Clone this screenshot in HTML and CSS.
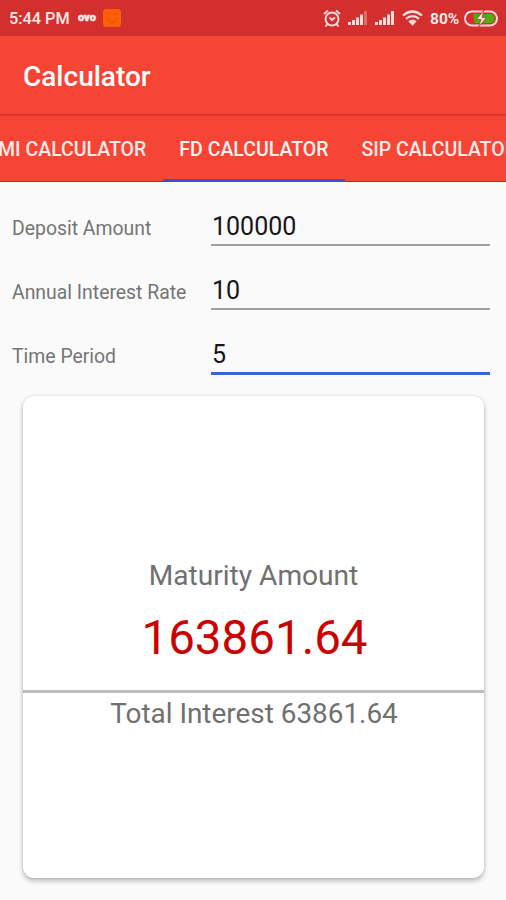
FILE: index.html
```html
<!DOCTYPE html>
<html lang="en">
<head>
  <meta charset="UTF-8" />
  <meta name="viewport" content="width=device-width, initial-scale=1.0" />
  <title>Calculator</title>
  <link rel="stylesheet" href="styles.css">
</head>
<body>

  <!-- Status Bar -->
  <div class="status-bar">
    <span class="time">5:44 PM</span>
    <span class="ovo">ovo</span>
    <svg class="app-icon" width="18" height="18" viewBox="0 0 18 18">
      <rect width="18" height="18" rx="3" fill="#fb5f05" />
      <path d="M4 3.500l2 2M14 4l-3 1.500M5 8.500q0 5 4 5t5-5" fill="none" stroke="#e84a00" stroke-width="1" />
    </svg>
    <div class="status-icons">
      <svg width="18" height="19" viewBox="0 0 18 19" fill="none" stroke="#ffdcda" stroke-width="1.9">
        <circle cx="9" cy="10" r="6.5" />
        <path d="M1 5l4-3.500M17 5l-4-3.500M4.500 15l-2 2.500M13.500 15l2 2.500M6.500 8.500l2.500 2.500 3-2.500" />
      </svg>
      <svg class="signal" width="20" height="14" viewBox="0 0 20 14" fill="#ffdcda">
        <path d="M0 11h3v3H0zM4 9h3v5H4zM8 6.500h3V14H8zM12 3.500h3V14h-3z" />
        <path d="M16 0h3v14h-3z" opacity=".35" />
      </svg>
      <svg class="signal" width="20" height="14" viewBox="0 0 20 14" fill="#ffdcda">
        <path d="M0 11h3v3H0zM4 9h3v5H4zM8 6.500h3V14H8zM12 3.500h3V14h-3zM16 0h3v14h-3z" />
      </svg>
      <svg class="wifi" width="21" height="16" viewBox="0 0 21 16" fill="none" stroke="#ffdcda" stroke-width="2.2">
        <path d="M1 5.500q9.500-8 19 0M4 8.800q6.500-5.500 13 0M7 12q3.500-2.800 7 0" />
        <path d="M7.500 12.500l3 3.300 3-3.300q-3-2-6 0z" fill="#ffdcda" stroke="none" />
      </svg>
      <span class="percent">80%</span>
      <svg class="battery" width="35" height="17" viewBox="0 0 35 17">
        <rect x="1" y="1.500" width="32" height="14" rx="7" fill="none" stroke="#ffdcda" stroke-width="2" />
        <path d="M9 4h17a4.500 4.500 0 0 1 0 9H11z" fill="#4caf0a" />
        <path d="M20 0l-7.500 9.500h4.500L14.500 17 22.500 7.500H18z" fill="#ffe9e7" stroke="#d32f2f" stroke-width=".8" />
      </svg>
    </div>
  </div>

  <header class="toolbar">
    <h1>Calculator</h1>
  </header>

  <!-- Tabs, scrolled part way -->
  <nav class="tabs">
    <a class="tab">EMI CALCULATOR</a>
    <a class="tab active">FD CALCULATOR</a>
    <a class="tab">SIP CALCULATOR</a>
  </nav>

  <main>
    <form class="fields">
      <div class="field">
        <label for="deposit">Deposit Amount</label>
        <input type="text" id="deposit" value="100000">
      </div>
      <div class="field">
        <label for="rate">Annual Interest Rate</label>
        <input type="text" id="rate" value="10">
      </div>
      <div class="field">
        <label for="period">Time Period</label>
        <input type="text" id="period" class="focused" value="5">
      </div>
    </form>

    <!-- Result -->
    <div class="card">
      <div class="maturity">
        <p class="caption">Maturity Amount</p>
        <p class="amount">163861.64</p>
      </div>
      <p class="caption interest">Total Interest 63861.64</p>
    </div>
  </main>

</body>
</html>
```

FILE: styles.css
```css
* {
  box-sizing: border-box;
  margin: 0;
  padding: 0;
  font-family: Roboto, "Liberation Sans", sans-serif;
}

body {
  width: 506px;
  height: 900px;
  overflow: hidden;
  display: flex;
  flex-direction: column;
  background-color: #fafafa;
}

.status-bar {
  height: 36px;
  flex-shrink: 0;
  display: flex;
  align-items: center;
  padding: 0 7px 0 9px;
  background-color: #d32f2f;
  color: #ffe9e7;
}

.time {
  width: 69px;
  padding-top: 1px;
  font-size: 16.3px;
  font-weight: 500;
  white-space: nowrap;
}

.ovo {
  width: 25px;
  font-size: 11px;
  font-weight: 900;
  line-height: 12px;
  -webkit-text-stroke: 0.5px #ffe9e7;
}

.status-icons {
  margin-left: auto;
  display: flex;
  align-items: center;
}

.signal {
  margin-left: 7px;
}

.wifi {
  margin-left: 7px;
}

.percent {
  width: 34px;
  margin-left: 7px;
  padding-top: 1px;
  font-size: 15.5px;
  font-weight: 700;
}

.toolbar {
  height: 79px;
  flex-shrink: 0;
  display: flex;
  align-items: center;
  padding: 3px 23px 0;
  background-color: #f64435;
  border-bottom: 1px solid #c9382c;
  box-shadow: 0 1px 1px rgba(0, 0, 0, 0.1);
  z-index: 1;
}

h1 {
  font-size: 28px;
  font-weight: 500;
  color: #fff;
}

.tabs {
  width: 506px;
  height: 67px;
  flex-shrink: 0;
  display: flex;
  justify-content: center;
  overflow: hidden;
  padding-right: 2px;
  background-color: #f64435;
  border-bottom: 1px solid #e8170f;
}

.tab {
  flex-shrink: 0;
  height: 66px;
  padding: 0 16.5px;
  line-height: 69px;
  font-size: 19.5px;
  font-weight: 500;
  color: #ffebe9;
  white-space: nowrap;
}

.tab.active {
  color: #fff3f2;
  border-bottom: 2px solid #3f51d8;
}

.fields {
  padding: 12px 16px 0 12px;
}

.field {
  height: 64px;
  display: flex;
  align-items: flex-start;
}

.field label {
  width: 199px;
  line-height: 69px;
  font-size: 19.4px;
  color: #757575;
}

.field input {
  width: 279px;
  height: 52px;
  padding: 15px 0 0 1px;
  border: none;
  border-bottom: 2px solid #a0a0a0;
  outline: none;
  background: none;
  font-size: 25px;
  color: #161616;
}

.field input.focused {
  height: 53px;
  border-bottom: 3px solid #3367d6;
}

.card {
  height: 482px;
  margin: 10px 22px 0 23px;
  border-radius: 11px;
  background-color: #fff;
  box-shadow: 0 3px 5px rgba(0, 0, 0, 0.25), 0 0 3px rgba(0, 0, 0, 0.12);
  text-align: center;
}

.maturity {
  height: 297px;
  padding-top: 163px;
  border-bottom: 3px solid #bdbdbd;
}

.caption {
  font-size: 28.1px;
  line-height: 34px;
  color: #707070;
}

.amount {
  margin-top: 17px;
  padding-left: 2px;
  font-size: 47.5px;
  line-height: 56px;
  color: #cc0000;
}

.interest {
  padding: 4px 0 0 1px;
  font-size: 27.9px;
}
```
